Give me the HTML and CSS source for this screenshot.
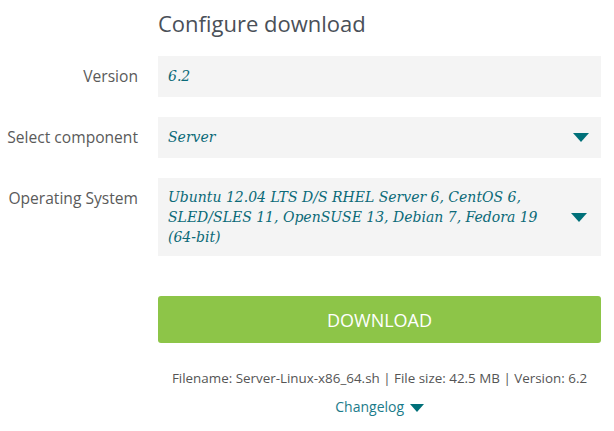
FILE: index.html
```html
<!DOCTYPE html>
<html lang="en">
<head>
    <meta charset="UTF-8">
    <title>Configure download</title>
    <link rel="stylesheet" href="styles.css">
</head>
<body>

<div class="container">
    <h1>Configure download</h1>
    <form id="downloadForm">
        <div class="row">
            <label class="label">Version</label>
            <div class="field">6.2</div>
        </div>
        <div class="row">
            <label class="label">Select component</label>
            <div class="field select">
                <span>Server</span>
                <span class="arrow"></span>
            </div>
        </div>
        <div class="row">
            <label class="label">Operating System</label>
            <div class="field select multi">
                <span>Ubuntu 12.04 LTS D/S RHEL Server 6, CentOS 6, SLED/SLES 11, OpenSUSE 13, Debian 7, Fedora 19 (64-bit)</span>
                <span class="arrow"></span>
            </div>
        </div>
        <div class="row">
            <div class="label"></div>
            <div class="actions">
                <button type="submit" class="download">DOWNLOAD</button>
                <p class="info">Filename: Server-Linux-x86_64.sh | File size: 42.5 MB | Version: 6.2</p>
                <a href="#" class="changelog">Changelog <span class="small-arrow"></span></a>
            </div>
        </div>
    </form>
</div>

</body>
</html>
```

FILE: styles.css
```css
body {
    font-family: "Open Sans", "Noto Sans", sans-serif;
    margin: 0;
    padding: 0;
    background-color: #fff;
    color: #555;
}
.container {
    padding: 8px 13px 0 0;
}
h1 {
    margin: 0 0 18px 158px;
    font-size: 22px;
    font-weight: 400;
    line-height: 30px;
    color: #4a5058;
}
.row {
    display: flex;
    margin-bottom: 20px;
}
.label {
    width: 138px;
    flex-shrink: 0;
    margin-right: 20px;
    text-align: right;
    font-size: 15.6px;
    line-height: 20px;
    padding-top: 10px;
    color: #5a5a5a;
}
.field {
    flex: 1;
    background-color: #f4f4f4;
    padding: 10px 10px 11px;
    font-family: "DejaVu Serif", serif;
    font-style: italic;
    font-size: 14px;
    line-height: 20px;
    color: #0b6a78;
}
.select {
    display: flex;
    align-items: center;
    justify-content: space-between;
}
.multi {
    padding: 9px 12px 9px 10px;
}
.multi span:first-child {
    max-width: 385px;
}
.arrow {
    width: 0;
    height: 0;
    margin-right: 2px;
    border-left: 8px solid transparent;
    border-right: 8px solid transparent;
    border-top: 9px solid #007079;
}
.actions {
    flex: 1;
    text-align: center;
    margin-top: 20px;
}
.download {
    width: 100%;
    height: 47px;
    border: none;
    border-radius: 3px;
    background-color: #8dc548;
    color: #fff;
    font-family: "Open Sans", "Noto Sans", sans-serif;
    font-size: 18px;
    cursor: pointer;
}
.info {
    margin: 26px 0 8px;
    font-size: 13.4px;
    line-height: 18px;
    color: #555;
}
.changelog {
    font-size: 14px;
    color: #1b7b8a;
    text-decoration: none;
}
.small-arrow {
    display: inline-block;
    width: 0;
    height: 0;
    margin-left: 2px;
    border-left: 7px solid transparent;
    border-right: 7px solid transparent;
    border-top: 8px solid #007079;
    vertical-align: middle;
}
```
